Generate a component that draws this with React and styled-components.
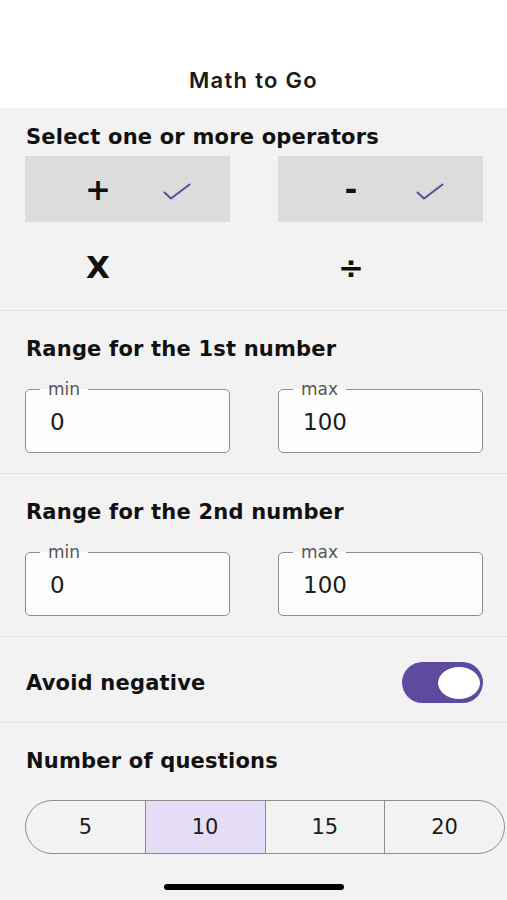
import React, { useState } from "react";
import styled, { createGlobalStyle } from "styled-components";

const GlobalStyle = createGlobalStyle`
  body {
    margin: 0;
    background: #f2f2f2;
    font-family: "DejaVu Sans", Inter, "Liberation Sans", sans-serif;
    color: #111;
  }
`;

const OPERATORS = [
  { symbol: "+", selected: true },
  { symbol: "-", selected: true },
  { symbol: "X", selected: false },
  { symbol: "÷", selected: false },
];

const COUNTS = [5, 10, 15, 20];

const Check = () => (
  <CheckIcon viewBox="0 0 28 17" fill="none">
    <path
      d="M1.5 9.5L8 15.5L26.5 1.5"
      stroke="#5b4a9c"
      strokeWidth="2"
      strokeLinecap="round"
      strokeLinejoin="round"
    />
  </CheckIcon>
);

const RangeField = ({ label, value }) => (
  <Field>
    <Legend>{label}</Legend>
    <Value>{value}</Value>
  </Field>
);

const App = () => {
  const [count, setCount] = useState(10);
  const [avoidNegative, setAvoidNegative] = useState(true);

  return (
    <>
      <GlobalStyle />
      <Page>
        <Header>Math to Go</Header>

        <Section $top={16} $bottom={10}>
          <Heading>Select one or more operators</Heading>
          <OperatorGrid>
            {OPERATORS.map((op) => (
              <Tile key={op.symbol} $selected={op.selected}>
                <Symbol>{op.symbol}</Symbol>
                {op.selected && <Check />}
              </Tile>
            ))}
          </OperatorGrid>
        </Section>

        <Section $top={25} $bottom={20}>
          <Heading>Range for the 1st number</Heading>
          <RangeRow>
            <RangeField label="min" value="0" />
            <RangeField label="max" value="100" />
          </RangeRow>
        </Section>

        <Section $top={25} $bottom={20}>
          <Heading>Range for the 2nd number</Heading>
          <RangeRow>
            <RangeField label="min" value="0" />
            <RangeField label="max" value="100" />
          </RangeRow>
        </Section>

        <ToggleRow>
          <Heading>Avoid negative</Heading>
          <Switch
            $on={avoidNegative}
            onClick={() => setAvoidNegative(!avoidNegative)}
          >
            <Knob />
          </Switch>
        </ToggleRow>

        <Section $top={25} $bottom={30} $last>
          <Heading>Number of questions</Heading>
          <Segmented>
            {COUNTS.map((n) => (
              <Segment
                key={n}
                $active={n === count}
                onClick={() => setCount(n)}
              >
                {n}
              </Segment>
            ))}
          </Segmented>
        </Section>

        <HomeBar />
      </Page>
    </>
  );
};

const Page = styled.div`
  width: 507px;
  min-height: 900px;
  display: flex;
  flex-direction: column;
`;

const Header = styled.div`
  height: 108px;
  background: #fff;
  display: flex;
  align-items: flex-end;
  justify-content: center;
  padding-bottom: 15px;
  box-sizing: border-box;
  font-family: Inter, "Liberation Sans", sans-serif;
  font-size: 22px;
  font-weight: 600;
  letter-spacing: 1.3px;
  color: #1a1a1a;
`;

const Section = styled.section`
  padding: ${(p) => p.$top}px 24px ${(p) => p.$bottom}px 25px;
  border-bottom: ${(p) => (p.$last ? "none" : "1px solid #e3e3e3")};
`;

const Heading = styled.h2`
  margin: 0;
  font-size: 21px;
  line-height: 26px;
  font-weight: 700;
  letter-spacing: 0.2px;
  padding-left: 1px;
`;

const OperatorGrid = styled.div`
  margin-top: 6px;
  display: grid;
  grid-template-columns: 205px 205px;
  grid-auto-rows: 66px;
  column-gap: 48px;
  row-gap: 12px;
`;

const Tile = styled.div`
  display: flex;
  align-items: center;
  background: ${(p) => (p.$selected ? "#dcdcdc" : "transparent")};
`;

const Symbol = styled.span`
  width: 130px;
  margin-left: 8px;
  text-align: center;
  font-size: 31px;
  font-weight: 700;
  line-height: 1;
`;

const CheckIcon = styled.svg`
  width: 28px;
  height: 17px;
  margin-top: 4px;
`;

const RangeRow = styled.div`
  margin-top: 17px;
  display: grid;
  grid-template-columns: 205px 205px;
  column-gap: 48px;
`;

const Field = styled.fieldset`
  margin: 0;
  height: 74px;
  box-sizing: border-box;
  padding: 0 0 0 14px;
  border: 1.5px solid #8c8c8c;
  border-radius: 5px;
  background: #fdfdfd;
  display: flex;
  align-items: center;
`;

const Legend = styled.legend`
  padding: 0 8px;
  font-size: 17px;
  line-height: 20px;
  color: #555;
`;

const Value = styled.span`
  margin-left: 10px;
  margin-top: -8px;
  font-size: 23px;
  color: #1c1c1c;
`;

const ToggleRow = styled.div`
  height: 86px;
  box-sizing: border-box;
  padding: 6px 24px 0 25px;
  display: flex;
  align-items: center;
  justify-content: space-between;
  border-bottom: 1px solid #e3e3e3;
`;

const Switch = styled.button`
  width: 81px;
  height: 41px;
  border: none;
  border-radius: 21px;
  padding: 0 1px;
  background: ${(p) => (p.$on ? "#5e4b9f" : "#d0d0d0")};
  display: flex;
  align-items: center;
  justify-content: ${(p) => (p.$on ? "flex-end" : "flex-start")};
  cursor: pointer;
`;

const Knob = styled.span`
  width: 46px;
  height: 36px;
  box-sizing: border-box;
  border-radius: 50%;
  background: #fff;
  border: 2.5px solid #5e4b9f;
`;

const Segmented = styled.div`
  margin-top: 26px;
  display: flex;
  height: 54px;
  box-sizing: border-box;
  border: 1.5px solid #8c8c8c;
  border-radius: 27px;
  overflow: hidden;
  margin-right: -22px;
`;

const Segment = styled.button`
  flex: 1;
  border: none;
  border-left: 1.5px solid #8c8c8c;
  background: ${(p) => (p.$active ? "#e4ddf5" : "transparent")};
  font-family: inherit;
  font-size: 21px;
  color: #1c1c1c;
  cursor: pointer;

  &:first-child {
    border-left: none;
  }
`;

const HomeBar = styled.div`
  align-self: center;
  width: 180px;
  height: 6px;
  border-radius: 3px;
  background: #000;
  margin-top: auto;
  margin-bottom: 10px;
`;

export default App;
